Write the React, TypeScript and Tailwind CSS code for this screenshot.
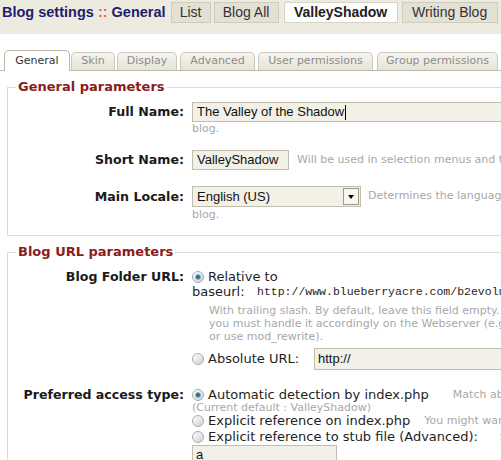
import type { ReactNode } from "react"

const sans = "font-['DejaVu_Sans',Verdana,sans-serif]"

function Radio({ checked }: { checked?: boolean }) {
  return (
    <span className="mr-[4px] flex h-[12px] w-[12px] shrink-0 items-center justify-center rounded-full border border-[#a3acb3] bg-linear-to-br from-[#ffffff] to-[#cfd2d2]">
      {checked && <span className="h-[6px] w-[6px] rounded-full border border-[#8fb8cc] bg-[#2b6a8c]" />}
    </span>
  )
}

function Row({ label, labelClass, className, children }: { label: string; labelClass: string; className: string; children: ReactNode }) {
  return (
    <div className={`flex items-start ${className}`}>
      <div className={`w-[176px] shrink-0 whitespace-nowrap text-right text-[12.6px] font-bold text-[#1a1a1a] ${labelClass}`}>{label}</div>
      <div className="ml-[8px] min-w-0 flex-1">{children}</div>
    </div>
  )
}

function TopButton({ children, active, className }: { children: ReactNode; active?: boolean; className: string }) {
  return (
    <div
      className={`flex h-[21px] items-center justify-center border text-[14px] ${
        active ? "border-[#d6d3c8] bg-[#fdfdfb] font-bold text-[#222]" : "border-[#cfcbbd] bg-[#e3e0d4] text-[#333]"
      } ${className}`}
    >
      {children}
    </div>
  )
}

function Tab({ children, active, className }: { children: ReactNode; active?: boolean; className: string }) {
  return (
    <div
      className={`flex items-center justify-center rounded-t-[5px] border border-b-0 ${
        active
          ? "-mb-px h-[21px] border-[#bdb9a9] bg-white text-[#333]"
          : "h-[18px] border-[#cdc9ba] bg-linear-to-b from-[#f6f4ee] to-[#e6e3d7] text-[#8c8c8c]"
      } ${className}`}
    >
      {children}
    </div>
  )
}

const inputBox = "border border-[#c1beb0] bg-[#f2f0e7] font-['Liberation_Sans',Arial,sans-serif] text-[13px] text-[#111]"
const hint = "text-[11px] text-[#a8a8a8]"
const option = "flex h-[16px] items-center whitespace-nowrap text-[13px] text-[#1e1e1e]"

export default function App() {
  return (
    <div className="h-[460px] w-[501px] overflow-hidden bg-white">
      <div className={`w-[660px] ${sans}`}>
        {/* Top bar */}
        <div className="flex h-[34px] items-start bg-[#edeae0] pl-[2px] pt-[2px] font-['Liberation_Sans',Arial,sans-serif]">
          <div className="h-[21px] text-[14.5px] font-bold leading-[21px] text-[#1d1d6c]">
            Blog settings <span className="text-[#e0673a]">::</span> General
          </div>
          <TopButton className="ml-[5px] w-[40px]">List</TopButton>
          <TopButton className="ml-[3px] w-[65px]">Blog All</TopButton>
          <TopButton active className="ml-[5px] w-[114px]">ValleyShadow</TopButton>
          <TopButton className="ml-[4px] w-[96px]">Writing Blog</TopButton>
          <TopButton className="ml-[3px] w-[80px]">Other</TopButton>
        </div>

        {/* Tabs */}
        <div className="mt-[16px] flex h-[21px] items-end border-b border-[#bdb9a9] pl-[4px] text-[11px]">
          <Tab active className="w-[66px]">General</Tab>
          <Tab className="ml-[1px] w-[44px]">Skin</Tab>
          <Tab className="ml-[2px] w-[60px]">Display</Tab>
          <Tab className="ml-[3px] w-[75px]">Advanced</Tab>
          <Tab className="ml-[3px] w-[115px]">User permissions</Tab>
          <Tab className="ml-[4px] w-[121px]">Group permissions</Tab>
        </div>

        {/* General parameters */}
        <fieldset className="ml-[7px] mt-[8px] w-[620px] border border-[#dedbd1] pb-[14px]">
          <legend className="ml-[8px] px-[2px] text-[13px] font-bold leading-[16px] text-[#8a1c1c]">General parameters</legend>

          <Row label="Full Name:" labelClass="leading-[20px]" className="mt-[7px]">
            <div className={`flex h-[20px] w-[420px] items-center pl-[4px] ${inputBox}`}>
              The Valley of the Shadow
              <span className="ml-px h-[15px] w-px bg-black" />
            </div>
            <div className={`mt-[1px] leading-[12px] ${hint}`}>blog.</div>
          </Row>

          <Row label="Short Name:" labelClass="leading-[20px]" className="mt-[15px]">
            <div className="flex items-center">
              <div className={`flex h-[20px] w-[97px] shrink-0 items-center pl-[4px] ${inputBox}`}>ValleyShadow</div>
              <span className={`ml-[8px] whitespace-nowrap ${hint}`}>Will be used in selection menus and throughout the admin interface.</span>
            </div>
          </Row>

          <Row label="Main Locale:" labelClass="leading-[21px]" className="mt-[16px]">
            <div className="flex items-center">
              <div className={`flex h-[21px] w-[169px] shrink-0 items-center justify-between pl-[4px] pr-[1px] ${inputBox}`}>
                English (US)
                <span className="flex h-[17px] w-[16px] items-center justify-center border border-[#9c998c] bg-[#f7f6f1]">
                  <span className="h-0 w-0 border-x-[3.5px] border-t-[4px] border-x-transparent border-t-black" />
                </span>
              </div>
              <span className={`ml-[7px] whitespace-nowrap ${hint}`}>Determines the language of the navigation links on the blog.</span>
            </div>
            <div className={`mt-[2px] leading-[12px] ${hint}`}>blog.</div>
          </Row>
        </fieldset>

        {/* Blog URL parameters */}
        <fieldset className="ml-[7px] mt-[8px] w-[620px] border border-[#dedbd1] pb-[14px]">
          <legend className="ml-[8px] px-[2px] text-[13px] font-bold leading-[16px] text-[#8a1c1c]">Blog URL parameters</legend>

          <Row label="Blog Folder URL:" labelClass="leading-[16px]" className="mt-[9px]">
            <div className={option}>
              <Radio checked />
              Relative to
            </div>
            <div className="flex h-[14px] items-center whitespace-nowrap text-[13px] text-[#1e1e1e]">
              <span className="w-[65px] shrink-0">baseurl:</span>
              <span className="font-['Liberation_Mono','Courier_New',monospace] text-[11.5px]">http://www.blueberryacre.com/b2evolution/blogs/</span>
            </div>
            <div className={`mt-[5px] whitespace-nowrap pl-[17px] leading-[13px] ${hint}`}>
              <div>With trailing slash. By default, leave this field empty. If you want to use a subfolder,</div>
              <div>you must handle it accordingly on the Webserver (e.g. create a subfolder + stub file</div>
              <div>or use mod_rewrite).</div>
            </div>
            <div className="mt-[5px] flex h-[22px] items-center text-[13px] text-[#1e1e1e]">
              <Radio />
              <span className="w-[106px] shrink-0">Absolute URL:</span>
              <div className={`flex h-[22px] w-[300px] items-center pl-[3px] ${inputBox}`}>http://</div>
            </div>
          </Row>

          <Row label="Preferred access type:" labelClass="leading-[16px]" className="mt-[17px]">
            <div className={option}>
              <Radio checked />
              Automatic detection by index.php
              <span className={`ml-[24px] ${hint}`}>Match absolute URL or use default blog as needed.</span>
            </div>
            <div className={`leading-[10px] ${hint}`}>(Current default : ValleyShadow)</div>
            <div className={option}>
              <Radio />
              Explicit reference on index.php
              <span className={`ml-[14px] ${hint}`}>You might want to use extra-path info with this.</span>
            </div>
            <div className={option}>
              <Radio />
              Explicit reference to stub file (Advanced):
              <span className="ml-[22px]">Stub name:</span>
            </div>
            <div className={`flex h-[20px] w-[145px] items-center pl-[3px] ${inputBox}`}>a</div>
          </Row>
        </fieldset>
      </div>
    </div>
  )
}
